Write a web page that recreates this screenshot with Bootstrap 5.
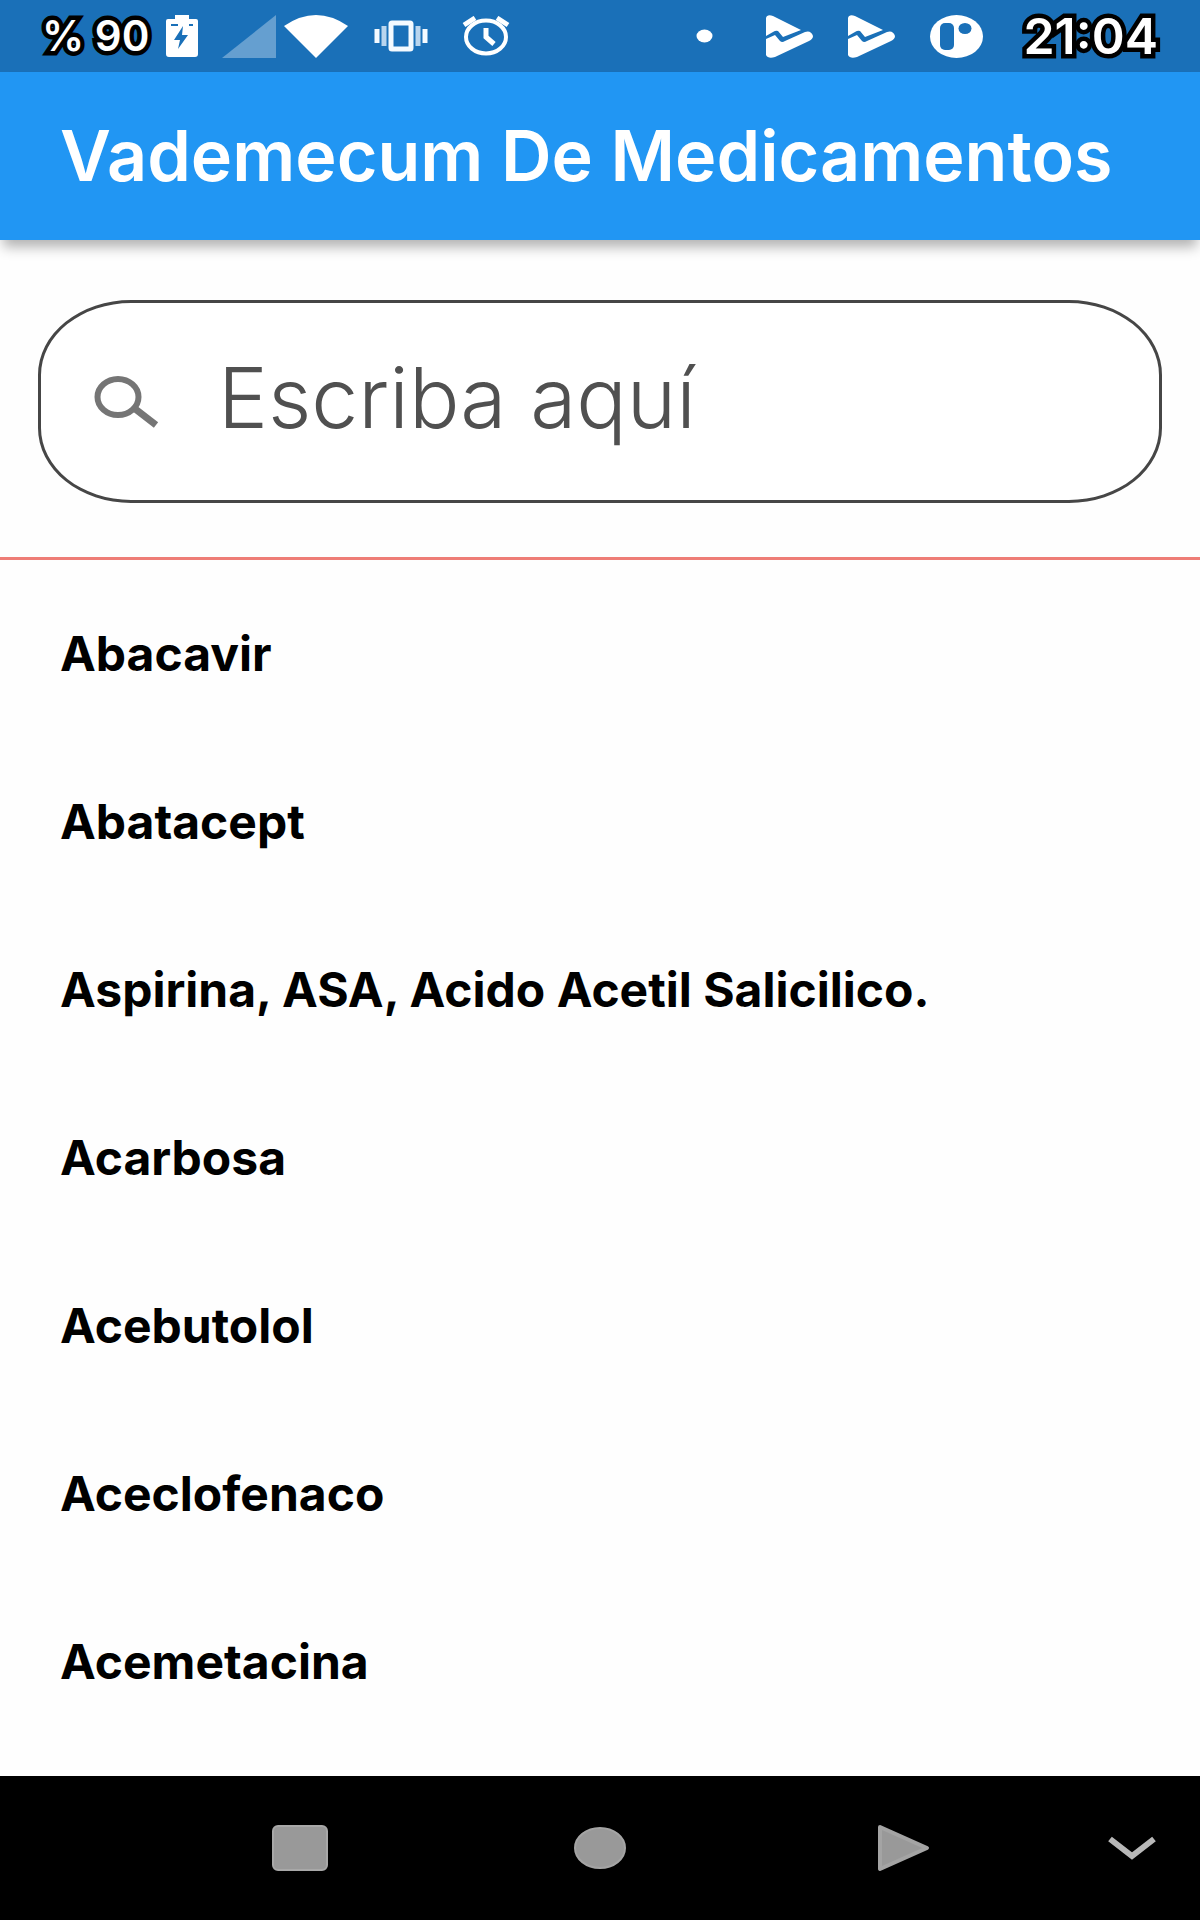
<!DOCTYPE html>
<html lang="es">
<head>
<meta charset="utf-8">
<meta name="viewport" content="width=device-width, initial-scale=1">
<title>Vademecum De Medicamentos</title>
<link href="https://cdn.jsdelivr.net/npm/bootstrap@5.3.0/dist/css/bootstrap.min.css" rel="stylesheet">
<style>
  body { font-family: Inter, Roboto, sans-serif; background: #fefefe; color: #000; }
  svg { display: block; flex: none; }
  .status-bar { height: 72px; padding: 0 42px; background: #1a70b8; color: #fff; line-height: 72px; font-weight: 600; }
  .outlined { -webkit-text-stroke: 9px #000; paint-order: stroke fill; stroke-linejoin: round; }
  .battery-text { font-size: 42px; margin-right: 17px; }
  .clock-text { font-size: 50px; margin-left: 5px; }
  .icons-start { gap: 26px; }
  .icons-end { gap: 35px; }
  .icon-alarm { margin-left: 8px; }
  .icon-play { margin-left: 18px; }
  .app-bar { height: 168px; padding: 0 60px; background: #2196f3; box-shadow: 0 10px 12px -3px rgba(0, 0, 0, .3); z-index: 1; }
  .app-title { font-size: 70px; line-height: 84px; font-weight: 600; color: #fff; }
  .search-zone { padding: 60px 38px 54px; border-bottom: 3px solid #ee7d76; }
  .search-box { height: 203px; padding: 0 53px; border: 3px solid #464646; border-radius: 93px / 75px; background: #fff; }
  .search-input, .search-input:focus { margin-left: 58px; padding: 0 0 8px; border: 0; background: transparent; box-shadow: none; font-size: 84px; line-height: 104px; font-weight: 300; color: #505050; }
  .search-input::placeholder { color: #505050; opacity: 1; }
  .drug-list { padding-top: 10px; }
  .drug-item { height: 168px; padding: 0 60px; border: 0; background: transparent; font-size: 48px; line-height: 58px; font-weight: 700; color: #000; }
  .system-nav { height: 144px; background: #000; padding-left: 12.5%; }
  .nav-key { width: 28.5714%; height: 100%; padding: 0; border: 0; background: transparent; }
  .nav-key-end { width: 14.2857%; padding-left: 14px; }
</style>
</head>
<body>
<div class="d-flex flex-column min-vh-100">
  <div class="status-bar d-flex align-items-center justify-content-between">
    <div class="icons-start d-flex align-items-center">
      <div class="d-flex align-items-center">
        <span class="battery-text outlined">% 90</span>
        <svg width="32" height="42" viewBox="0 0 32 42"><path fill="#fff" d="M9 0h14v4h7q2 0 2 2v33q0 3-3 3H3q-3 0-3-3V6q0-2 2-2h7z"/><path fill="#1a70b8" d="M17 11 8 25h6l-2 9 10-14h-6zM5 9h7v2H5zm18 0h4v2h-4z"/></svg>
        <svg class="ms-4" width="54" height="43" viewBox="0 0 54 43"><path fill="#659fd0" d="M54 0v43H0z"/></svg>
        <svg class="ms-2" width="64" height="43" viewBox="0 0 64 43"><path fill="#fff" d="M0 11Q32-11 64 11L32 43z"/></svg>
      </div>
      <svg width="54" height="34" viewBox="0 0 54 34"><rect x="17" y="4" width="20" height="26" rx="1" fill="none" stroke="#f4faff" stroke-width="5"/><path stroke="#b9d5ee" stroke-width="5" d="M10 7v20M44 7v20"/><path stroke="#f4faff" stroke-width="5" d="M3 10v14M51 10v14"/></svg>
      <svg class="icon-alarm" width="48" height="40" viewBox="0 0 48 40" fill="none" stroke="#fff"><ellipse cx="24" cy="21" rx="20" ry="16.500" stroke-width="4"/><path stroke-width="5" d="M2 9 13 2M46 9 35 2"/><path stroke-width="5" d="M24 12v9l8 7"/></svg>
    </div>
    <div class="icons-end d-flex align-items-center">
      <svg width="17" height="14" viewBox="0 0 17 14"><ellipse cx="8.500" cy="7" rx="8" ry="6.500" fill="#fff"/></svg>
      <svg class="icon-play" width="47" height="43" viewBox="0 0 47 43"><path fill="#fff" d="M0 3Q1-1 7 1L35 15 17 22 12 16Q10 15 7 17L0 21zM0 24 9 20 14 26Q16 28 19 26L39 17Q45 15 47 21 47 24 43 26L9 42Q2 44 0 40z"/></svg>
      <svg width="47" height="43" viewBox="0 0 47 43"><path fill="#fff" d="M0 3Q1-1 7 1L35 15 17 22 12 16Q10 15 7 17L0 21zM0 24 9 20 14 26Q16 28 19 26L39 17Q45 15 47 21 47 24 43 26L9 42Q2 44 0 40z"/></svg>
      <svg width="53" height="43" viewBox="0 0 53 43"><ellipse cx="26.500" cy="21.500" rx="26.500" ry="21.500" fill="#fff"/><rect x="10" y="8" width="14" height="27" rx="5" fill="#1a70b8"/><ellipse cx="35" cy="13.500" rx="6.500" ry="5.500" fill="#1a70b8"/></svg>
      <span class="clock-text outlined">21:04</span>
    </div>
  </div>

  <header class="app-bar navbar position-relative">
    <h1 class="app-title m-0 text-nowrap">Vademecum De Medicamentos</h1>
  </header>

  <main>
    <div class="search-zone">
      <div class="search-box d-flex align-items-center">
        <label for="buscar" aria-label="Buscar">
          <svg width="66" height="52" viewBox="0 0 66 52" fill="none" stroke="#757575"><ellipse cx="24" cy="21" rx="20.500" ry="18" stroke-width="6"/><path stroke-width="7" d="M40 32 62 49"/></svg>
        </label>
        <input id="buscar" class="search-input form-control" type="text" placeholder="Escriba aquí">
      </div>
    </div>
    <ul class="drug-list list-group list-group-flush">
      <li class="drug-item list-group-item d-flex align-items-center">Abacavir</li>
      <li class="drug-item list-group-item d-flex align-items-center">Abatacept</li>
      <li class="drug-item list-group-item d-flex align-items-center">Aspirina, ASA, Acido Acetil Salicilico.</li>
      <li class="drug-item list-group-item d-flex align-items-center">Acarbosa</li>
      <li class="drug-item list-group-item d-flex align-items-center">Acebutolol</li>
      <li class="drug-item list-group-item d-flex align-items-center">Aceclofenaco</li>
      <li class="drug-item list-group-item d-flex align-items-center">Acemetacina</li>
    </ul>
  </main>

  <nav class="system-nav d-flex mt-auto">
    <button type="button" class="nav-key d-flex align-items-center justify-content-center" aria-label="Recientes"><svg width="56" height="46" viewBox="0 0 56 46"><rect x="1" y="1" width="54" height="44" rx="5" fill="#999" stroke="#a8a8a8" stroke-width="2"/></svg></button>
    <button type="button" class="nav-key d-flex align-items-center justify-content-center" aria-label="Inicio"><svg width="52" height="42" viewBox="0 0 52 42"><ellipse cx="26" cy="21" rx="25" ry="20" fill="#999" stroke="#a4a4a4" stroke-width="2"/></svg></button>
    <button type="button" class="nav-key d-flex align-items-center justify-content-center" aria-label="Atrás"><svg width="60" height="48" viewBox="0 0 60 48"><path d="M10 3 57 24 10 45z" fill="#999" stroke="#a4a4a4" stroke-width="4" stroke-linejoin="round"/></svg></button>
    <button type="button" class="nav-key nav-key-end d-flex align-items-center justify-content-center" aria-label="Ocultar"><svg width="50" height="24" viewBox="0 0 50 24"><path d="M3 3 25 20 47 3" fill="none" stroke="#b8b8b8" stroke-width="6"/></svg></button>
  </nav>
</div>
<script src="https://cdn.jsdelivr.net/npm/bootstrap@5.3.0/dist/js/bootstrap.bundle.min.js"></script>
</body>
</html>
